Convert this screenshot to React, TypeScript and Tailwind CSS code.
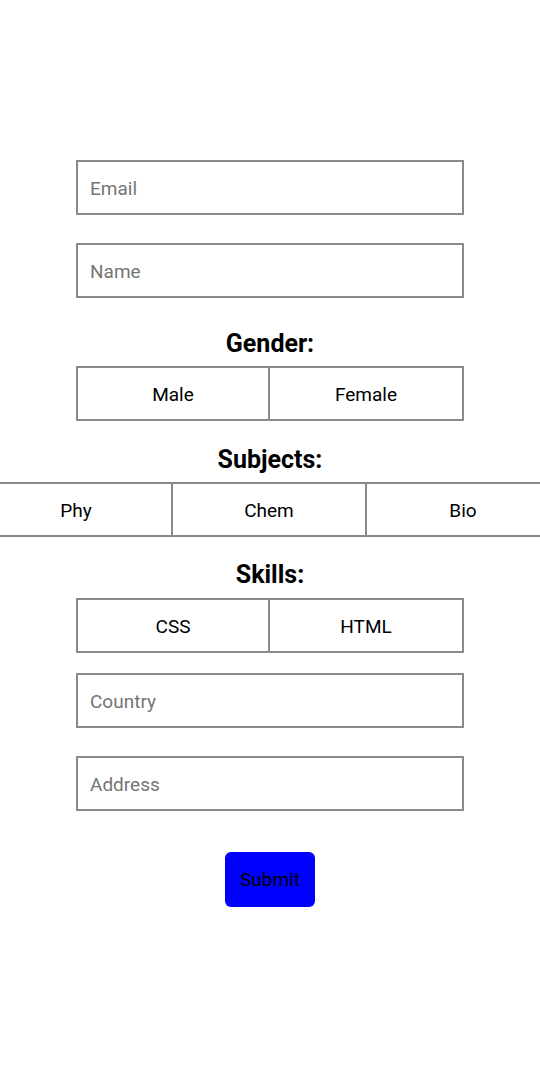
import React, { useState } from "react";

const Field = ({ placeholder, className = "" }: { placeholder: string; className?: string }) => (
  <input
    placeholder={placeholder}
    className={`w-[388px] h-[55px] border-2 border-[#8a8a8a] px-[12px] pt-[2px] text-[19px] text-black placeholder:text-[#757575] outline-none ${className}`}
  />
);

const Choice = ({ label, first }: { label: string; first?: boolean }) => (
  <button
    type="button"
    className={`w-[194px] h-[55px] shrink-0 border-2 border-[#8a8a8a] bg-white pt-[3px] text-[19px] text-black ${first ? "" : "border-l-0"}`}
  >
    {label}
  </button>
);

const Label = ({ text, className = "" }: { text: string; className?: string }) => (
  <h3 className={`text-[25px] leading-[28px] font-bold text-black ${className}`}>{text}</h3>
);

const App = () => {
  const [sent, setSent] = useState(false);

  return (
    <div
      className="w-[540px] min-h-[1092px] bg-white overflow-hidden flex flex-col items-center pt-[160px]"
      style={{ fontFamily: "Roboto, 'Noto Sans', sans-serif" }}
    >
      <Field placeholder="Email" />
      <Field placeholder="Name" className="mt-[28px]" />

      <Label text="Gender:" className="mt-[32px]" />
      <div className="flex mt-[8px]">
        <Choice label="Male" first />
        <Choice label="Female" />
      </div>

      <Label text="Subjects:" className="mt-[25px]" />
      <div className="w-[540px] flex justify-center mt-[8px]">
        <div className="flex shrink-0">
          <Choice label="Phy" first />
          <Choice label="Chem" />
          <Choice label="Bio" />
        </div>
      </div>

      <Label text="Skills:" className="mt-[24px]" />
      <div className="flex mt-[9px]">
        <Choice label="CSS" first />
        <Choice label="HTML" />
      </div>

      <Field placeholder="Country" className="mt-[20px]" />
      <Field placeholder="Address" className="mt-[28px]" />

      <button
        type="button"
        onClick={() => setSent(true)}
        className="mt-[41px] w-[90px] h-[55px] rounded-[6px] bg-[#0000ff] pt-[2px] text-[19px] text-black"
      >
        {sent ? "Submit" : "Submit"}
      </button>
    </div>
  );
};

export default App;
